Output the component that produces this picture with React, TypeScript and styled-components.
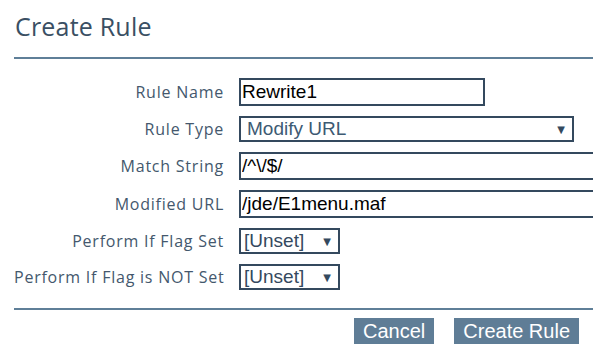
import React from "react";
import styled, { createGlobalStyle } from "styled-components";

const Global = createGlobalStyle`
  html, body { margin: 0; padding: 0; background: #ffffff; }
  body { font-family: "Open Sans", "Noto Sans", sans-serif; }
  * { box-sizing: border-box; }
`;

const Page = styled.div`
  width: 593px;
  height: 359px;
  overflow: hidden;
  padding-left: 14px;
`;

const Title = styled.h1`
  margin: 0;
  padding: 10px 0 0 1px;
  height: 57px;
  font-size: 25px;
  font-weight: 400;
  letter-spacing: 0.2px;
  line-height: 32px;
  color: #3a4f63;
`;

const Rule = styled.hr`
  margin: 0;
  border: none;
  height: 2px;
  background: #5f7f98;
  width: 600px;
`;

const Form = styled.form`
  display: grid;
  grid-template-columns: 209px auto;
  column-gap: 16px;
  row-gap: 10px;
  align-items: center;
  padding: 19px 0 18px;
`;

const Label = styled.label`
  text-align: right;
  font-size: 16px;
  letter-spacing: 0.77px;
  margin-right: -1px;
  color: #44586d;
  white-space: nowrap;
`;

const TextInput = styled.input<{ $w: number }>`
  width: ${(p) => p.$w}px;
  height: 28px;
  border: 2px solid #34495e;
  border-radius: 0;
  padding: 0 1px;
  font-family: "Liberation Sans", Arial, sans-serif;
  font-size: 19px;
  color: #000;
  outline: none;
  background: #fff;
`;

const SelectWrap = styled.div<{ $w: number }>`
  position: relative;
  width: ${(p) => p.$w}px;
  height: 26px;
`;

const Select = styled.select<{ $pad: number }>`
  appearance: none;
  -webkit-appearance: none;
  width: 100%;
  height: 100%;
  border: 2px solid #34495e;
  border-radius: 0;
  padding: 0 20px 0 ${(p) => p.$pad}px;
  font-family: "Liberation Sans", Arial, sans-serif;
  font-size: 19px;
  line-height: 22px;
  color: ${(p) => (p.$pad > 3 ? "#3d5a73" : "#34495e")};
  background: #fff;
  outline: none;
`;

const Arrow = styled.span`
  position: absolute;
  right: 9px;
  top: 50%;
  transform: translateY(-50%);
  font-family: "DejaVu Sans", sans-serif;
  font-size: 10px;
  color: #34495e;
  pointer-events: none;
`;

const Buttons = styled.div`
  display: flex;
  justify-content: flex-end;
  gap: 20px;
  padding: 8px 14px 0 0;
`;

const Button = styled.button`
  height: 26px;
  padding: 0 9px;
  border: none;
  border-radius: 0;
  background: #5f7d96;
  color: #fff;
  font-family: "Liberation Sans", Arial, sans-serif;
  font-size: 20px;
  line-height: 26px;
  cursor: pointer;
`;

export default function App() {
  return (
    <Page>
      <Global />
      <Title>Create Rule</Title>
      <Rule />
      <Form onSubmit={(e) => e.preventDefault()}>
        <Label>Rule Name</Label>
        <TextInput $w={246} defaultValue="Rewrite1" />
        <Label>Rule Type</Label>
        <SelectWrap $w={335}>
          <Select $pad={6} defaultValue="Modify URL">
            <option>Modify URL</option>
            <option>Redirect</option>
          </Select>
          <Arrow>▼</Arrow>
        </SelectWrap>
        <Label>Match String</Label>
        <TextInput $w={380} defaultValue="/^\/$/" />
        <Label>Modified URL</Label>
        <TextInput $w={380} defaultValue="/jde/E1menu.maf" />
        <Label>Perform If Flag Set</Label>
        <SelectWrap $w={101}>
          <Select $pad={3} defaultValue="[Unset]">
            <option>[Unset]</option>
          </Select>
          <Arrow>▼</Arrow>
        </SelectWrap>
        <Label>Perform If Flag is NOT Set</Label>
        <SelectWrap $w={101}>
          <Select $pad={3} defaultValue="[Unset]">
            <option>[Unset]</option>
          </Select>
          <Arrow>▼</Arrow>
        </SelectWrap>
      </Form>
      <Rule />
      <Buttons>
        <Button type="button">Cancel</Button>
        <Button type="button">Create Rule</Button>
      </Buttons>
    </Page>
  );
}
